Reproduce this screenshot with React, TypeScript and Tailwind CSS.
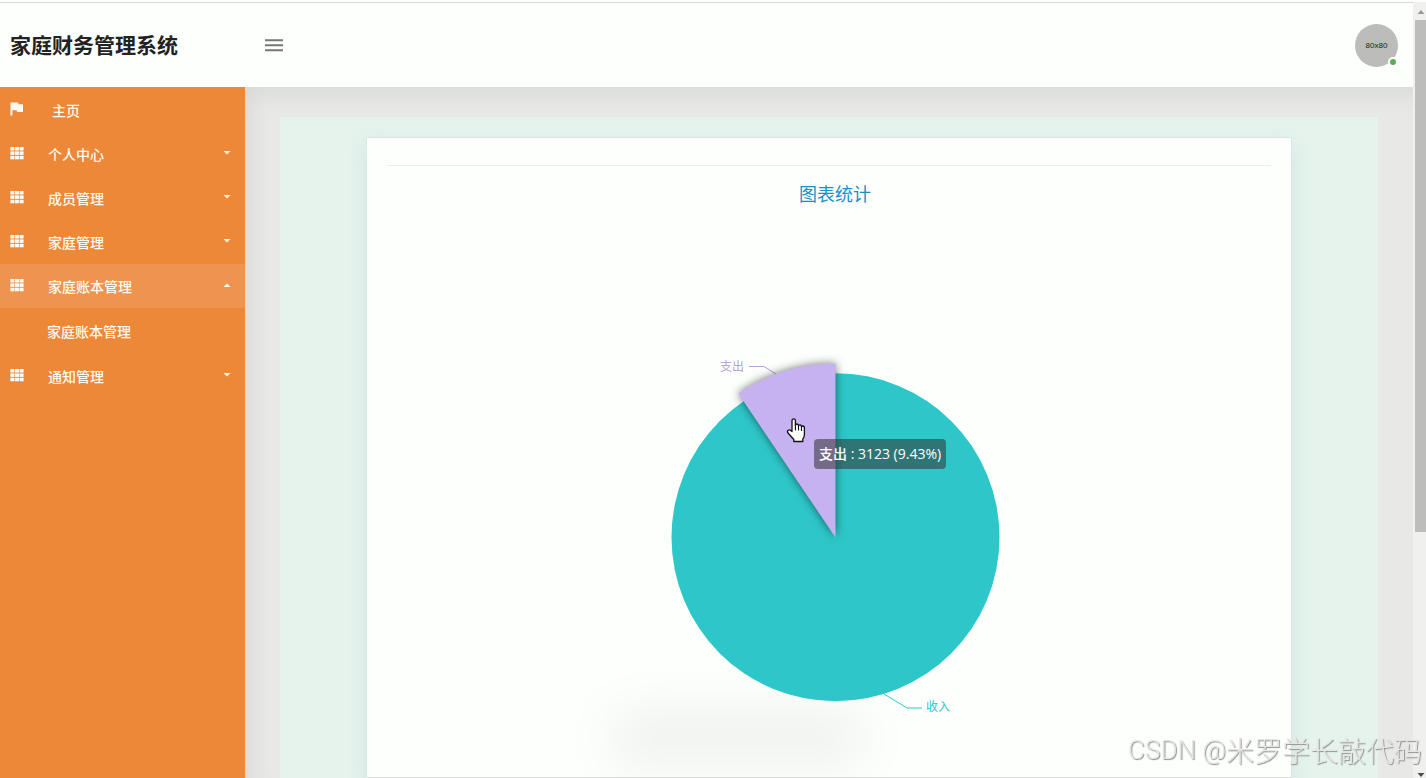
import { useState } from "react";

type MenuItem = {
  label: string;
  children?: string[];
};

const menu: MenuItem[] = [
  { label: "个人中心", children: ["修改密码", "个人信息"] },
  { label: "成员管理", children: ["成员"] },
  { label: "家庭管理", children: ["家庭"] },
  { label: "家庭账本管理", children: ["家庭账本管理"] },
  { label: "通知管理", children: ["通知"] },
];

function FlagIcon() {
  return (
    <svg viewBox="0 0 14 14" className="mb-0.5 h-3.5 w-3.5 fill-current" aria-hidden="true">
      <path d="M0.5 0.5H8L8.6 2.2H13V10H7.2L6.5 8.3H2.4V13.5H0.5Z" />
    </svg>
  );
}

function AppsIcon() {
  return (
    <svg viewBox="0 0 14 14" className="mb-0.5 h-3.5 w-3.5 fill-current" aria-hidden="true">
      {[1, 5.4, 9.8].map((y) =>
        [0.4, 5, 9.6].map((x) => <rect key={`${x}-${y}`} x={x} y={y} width="4" height="3.5" />)
      )}
    </svg>
  );
}

function Caret({ open }: { open: boolean }) {
  return (
    <svg viewBox="0 0 8 4" className="mb-0.5 h-1 w-2 fill-current" aria-hidden="true">
      <path d={open ? "M0.5 4H7.5L4 0.5Z" : "M0.5 0H7.5L4 3.5Z"} />
    </svg>
  );
}

function Header() {
  return (
    <header className="flex h-[85px] shrink-0 items-center justify-between border-t border-[#d9dad8] bg-[#fdfffc] pr-[15px]">
      <div className="flex items-center">
        <h1 className="w-[264px] pl-2.5 text-[21px] font-bold text-[#222]">家庭财务管理系统</h1>
        <button type="button" aria-label="菜单" className="text-[#777]">
          <svg viewBox="0 0 20 14" className="h-3.5 w-5 fill-current" aria-hidden="true">
            <path d="M1 1.2H19V3.2H1ZM1 6.2H19V8.2H1ZM1 11.2H19V13.2H1Z" />
          </svg>
        </button>
      </div>
      <div className="relative flex h-[43px] w-[43px] items-center justify-center rounded-full bg-[#bcbdbb] pt-0.5 font-['Liberation_Sans',sans-serif] text-[8px] font-medium text-[#222]">
        80x80
        <span className="absolute right-0 bottom-0 h-2.5 w-2.5 rounded-full border-2 border-[#fdfffc] bg-[#5fab58]" />
      </div>
    </header>
  );
}

function Sidebar() {
  const [open, setOpen] = useState("家庭账本管理");

  return (
    <nav className="w-[245px] shrink-0 bg-[#ec8837] text-sm font-medium text-[#fffaf2]">
      <a href="#home" className="flex h-[45px] items-center pl-2.5">
        <FlagIcon />
        <span className="pl-7">主页</span>
      </a>
      {menu.map((item) => {
        const isOpen = open === item.label;
        return (
          <div key={item.label}>
            <button
              type="button"
              aria-expanded={isOpen}
              onClick={() => setOpen(isOpen ? "" : item.label)}
              className={`flex h-11 w-full items-center pr-3.5 pl-2.5 ${isOpen ? "bg-[#ee944e]" : ""}`}
            >
              <AppsIcon />
              <span className="flex-1 pl-6 text-left">{item.label}</span>
              <Caret open={isOpen} />
            </button>
            {isOpen &&
              item.children?.map((child) => (
                <a key={child} href="#ledger" className="flex h-[46px] items-center pl-[47px]">
                  {child}
                </a>
              ))}
          </div>
        );
      })}
    </nav>
  );
}

function PieChart() {
  return (
    <div className="relative mx-auto mt-[120px] h-[400px] w-[420px]">
      {/* Soft smudge under the pie */}
      <div className="absolute top-[370px] -left-4 h-14 w-64 rounded-full bg-black/5 blur-xl" />

      <svg viewBox="625 340 420 400" className="relative h-full w-full overflow-visible">
        <circle cx="835.5" cy="537.2" r="164" fill="#2ec7c9" />
        <path d="M884 694L907 708H922" fill="none" stroke="#2ec7c9" />
        <path d="M749 366.5H764L776 374" fill="none" stroke="#b6a2de" />
        <path
          d="M835.5 537.5L738.3 393.5A174 174 0 0 1 835.5 363.5Z"
          fill="#c6b2f1"
          className="drop-shadow-[0_0_5px_rgba(0,0,0,0.55)]"
        />
        <text x="720" y="371" fontSize="12" fill="#b6a2de">
          支出
        </text>
        <text x="926" y="711" fontSize="12" fill="#2ec7c9">
          收入
        </text>

        {/* Hand pointer */}
        <path
          d="M792 431.5V420.5Q792 418.8 793.7 418.8Q795.4 418.8 795.4 420.5V425.5Q795.4 424 797 424Q798.5 424 798.5 426Q798.5 424.8 800 424.8Q801.5 424.8 801.5 427Q801.5 426 802.8 426Q804.4 426 804.4 428V434.5Q804.4 437 802.8 439V441.5H793.8V439.5L788 433Q786.8 431.2 788.2 430.2Q789.6 429.4 791 430.7Z"
          fill="#fff"
          stroke="#111"
          strokeWidth="1.3"
          strokeLinejoin="round"
        />
        <path d="M795.4 425V430.5M798.5 426V430.5M801.5 427V431" stroke="#111" strokeWidth="1.1" />
      </svg>

      <div className="absolute top-[99px] left-[189px] rounded bg-[#323232]/55 px-[5px] py-[5px] font-['Open_Sans','Noto_Sans_CJK_SC',sans-serif] text-sm leading-5 font-medium whitespace-nowrap text-white">
        支出 : 3123 (9.43%)
      </div>
    </div>
  );
}

function Scrollbar() {
  return (
    <div className="flex w-[13px] shrink-0 flex-col bg-[#f0f1ef] pl-0.5" aria-hidden="true">
      <svg viewBox="0 0 11 18" className="h-[18px] w-[11px] shrink-0 fill-[#9a9b99]">
        <path d="M2.5 12H9.5L6 8Z" />
      </svg>
      <div className="h-[66%] bg-[#bdbebc]" />
      <svg viewBox="0 0 11 6" className="mt-auto h-1.5 w-[11px] shrink-0 fill-[#4d4e4c]">
        <path d="M2.5 1H9.5L6 5Z" />
      </svg>
    </div>
  );
}

export default function App() {
  return (
    <div className="flex h-screen flex-col overflow-hidden bg-[#fdfffc] pt-0.5 font-['Noto_Sans_CJK_SC',sans-serif]">
      <div className="flex min-h-0 flex-1">
        <div className="flex min-w-0 flex-1 flex-col overflow-hidden">
          <Header />
          <div className="flex min-h-0 flex-1">
            <Sidebar />
            <main className="flex min-w-0 flex-1 flex-col bg-[#e8e9e7] px-[35px] pt-[30px] shadow-[inset_12px_14px_24px_-8px_rgba(0,20,15,0.07)]">
              <div className="flex min-h-0 flex-1 flex-col bg-[#e5f3ec] px-[86px] pt-5">
                <section className="min-h-0 flex-1 overflow-hidden rounded-xs border border-[#dbe7e6] border-b-[#d9dad8] bg-[#fdfffc] px-5 pt-[27px] shadow-[0_8px_20px_rgba(80,130,170,0.13)]">
                  <hr className="border-[#ecefed]" />
                  <div className="pl-3">
                    <h2 className="flex h-[54px] items-center justify-center text-lg text-[#1790c8]">图表统计</h2>
                    <PieChart />
                  </div>
                </section>
              </div>
            </main>
          </div>
        </div>
        <Scrollbar />
      </div>

      {/* Watermark */}
      <div className="pointer-events-none fixed right-1 bottom-1.5 flex items-center text-[28px] leading-[44px] font-light text-[#e4e5e4] [text-shadow:1px_1px_1px_#8e8f8e]">
        <span className="font-['Roboto',sans-serif] text-[26px] whitespace-pre">CSDN @</span>
        米罗学长敲代码
      </div>
    </div>
  );
}
